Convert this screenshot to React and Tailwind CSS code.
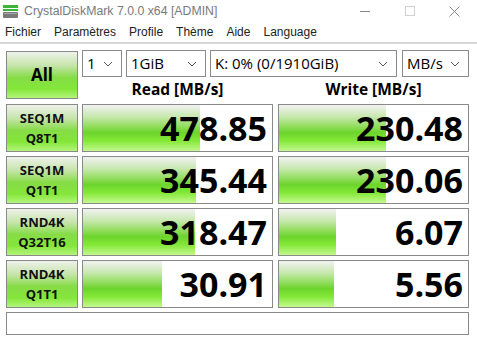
import React from 'react';

const rows = [
  { a: 'SEQ1M', b: 'Q8T1', read: '478.85', rw: 117, write: '230.48', ww: 107 },
  { a: 'SEQ1M', b: 'Q1T1', read: '345.44', rw: 113, write: '230.06', ww: 107 },
  { a: 'RND4K', b: 'Q32T16', read: '318.47', rw: 112, write: '6.07', ww: 57 },
  { a: 'RND4K', b: 'Q1T1', read: '30.91', rw: 79, write: '5.56', ww: 55 },
];

const barBg =
  'bg-[linear-gradient(to_bottom,#f2f2f2_0%,#c8e8b0_25%,#8edc58_48%,#6cd42c_60%,#84e838_78%,#c4f890_100%)]';
const btnBg =
  'bg-[linear-gradient(to_bottom,#eef2ea_0%,#c4e4a8_30%,#86dc48_55%,#84e638_80%,#b4f47c_100%)]';

const Chevron = () => (
  <svg width="10" height="6" viewBox="0 0 10 6" className="shrink-0">
    <path d="M1 1l4 4 4-4" fill="none" stroke="#555" strokeWidth="1" />
  </svg>
);

const Select = ({ w, label }) => (
  <div className={`${w} h-[27px] border border-[#8a8a8a] bg-white flex items-center justify-between pl-[4px] pr-[8px] text-[15px] text-black`}>
    <span>{label}</span>
    <Chevron />
  </div>
);

const ResultBox = ({ value, barW }) => (
  <div className="relative w-[191px] h-[48px] border border-[#8a8a8a] bg-white overflow-hidden">
    <div className={`absolute left-0 top-0 bottom-0 ${barBg}`} style={{ width: barW }} />
    <div className="relative h-full flex items-center justify-end pr-[5px] text-[34px] font-bold text-black leading-none">
      {value}
    </div>
  </div>
);

export default function App() {
  return (
    <div className="w-[477px] h-[340px] bg-white overflow-hidden font-['Open_Sans',sans-serif] select-none">
      {/* title bar */}
      <div className="h-[22px] flex items-center">
        <svg width="15" height="13" viewBox="0 0 15 13" className="ml-[3px] mr-[6px]">
          <rect x="0" y="0" width="15" height="3" fill="#3cb33c" />
          <rect x="0" y="4" width="15" height="2" fill="#3cb33c" />
          <rect x="0" y="7" width="15" height="6" rx="1" fill="#7a7a7a" />
          <rect x="1" y="8" width="13" height="1" fill="#a8a8a8" />
        </svg>
        <span className="text-[12.3px] text-[#7a7a7a] font-['Liberation_Sans',sans-serif]">CrystalDiskMark 7.0.0 x64 [ADMIN]</span>
        <div className="ml-auto flex items-center">
          <div className="w-[45px] flex justify-center">
            <div className="w-[10px] h-px bg-[#8a8a8a]" />
          </div>
          <div className="w-[45px] flex justify-center">
            <div className="w-[10px] h-[10px] border border-[#d0d0d0]" />
          </div>
          <div className="w-[45px] flex justify-center">
            <svg width="11" height="11" viewBox="0 0 11 11">
              <path d="M0.5 0.5l10 10M10.5 0.5l-10 10" stroke="#8a8a8a" strokeWidth="1" />
            </svg>
          </div>
        </div>
      </div>
      {/* menu */}
      <div className="h-[20px] flex items-center gap-[13px] pl-[5px] text-[12px] text-[#222] font-['Liberation_Sans',sans-serif]">
        <span>Fichier</span>
        <span>Paramètres</span>
        <span>Profile</span>
        <span>Thème</span>
        <span>Aide</span>
        <span>Language</span>
      </div>
      <div className="h-[2px] bg-[#d6d6d6]" />

      <div className="pl-[6px] pt-[6px]">
        {/* top controls */}
        <div className="flex gap-[4px]">
          <div className={`w-[72px] h-[48px] mt-[1px] border border-[#8a8a8a] ${btnBg} flex items-center justify-center text-[17px] font-bold text-black`}>
            All
          </div>
          <div className="flex flex-col">
            <div className="flex gap-[4px]">
              <Select w="w-[40px]" label="1" />
              <Select w="w-[80px]" label="1GiB" />
              <Select w="w-[187px]" label="K: 0% (0/1910GiB)" />
              <div className="ml-[1px]">
                <Select w="w-[67px]" label="MB/s" />
              </div>
            </div>
            <div className="flex gap-[5px] h-[26px] items-center text-[15.5px] font-bold text-black">
              <div className="w-[191px] text-center">Read [MB/s]</div>
              <div className="w-[191px] text-center">Write [MB/s]</div>
            </div>
          </div>
        </div>

        {/* results */}
        <div className="flex flex-col gap-[4px] mt-[1px]">
          {rows.map((r, i) => (
            <div key={i} className="flex">
              <div className={`w-[72px] h-[48px] border border-[#8a8a8a] ${btnBg} flex flex-col items-center justify-center text-[13px] font-bold text-[#111] leading-[20px]`}>
                <span>{r.a}</span>
                <span>{r.b}</span>
              </div>
              <div className="ml-[4px]">
                <ResultBox value={r.read} barW={r.rw} />
              </div>
              <div className="ml-[5px]">
                <ResultBox value={r.write} barW={r.ww} />
              </div>
            </div>
          ))}
        </div>

        {/* comment */}
        <div className="mt-[4px] w-[463px] h-[23px] border border-[#8a8a8a] bg-white" />
      </div>
    </div>
  );
}
